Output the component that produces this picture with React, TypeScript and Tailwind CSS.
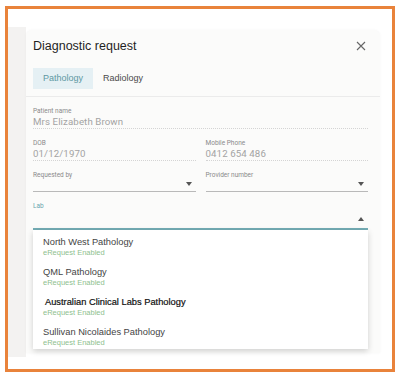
import React from 'react';

const LABS = [
  { name: 'North West Pathology', hi: false },
  { name: 'QML Pathology', hi: false },
  { name: 'Australian Clinical Labs Pathology', hi: true },
  { name: 'Sullivan Nicolaides Pathology', hi: false },
];

const Caret: React.FC<{ up?: boolean; color?: string }> = ({ up, color = '#555' }) => (
  <svg width="6" height="4" viewBox="0 0 6 4" className="shrink-0">
    <path d={up ? 'M0 4 L3 0 L6 4 Z' : 'M0 0 L6 0 L3 4 Z'} fill={color} />
  </svg>
);

const TextField: React.FC<{ label: string; value: string }> = ({ label, value }) => (
  <div className="flex-1 mt-[10px] flex flex-col border-b border-dotted border-[#d4d4d4]">
    <div className="h-[8px] text-[6.5px] leading-[8px] text-[#8a8a8a]">{label}</div>
    <div className="h-[13px] text-[9.7px] leading-[13px] text-[#a3a3a3] tracking-[0.1px]">{value}</div>
  </div>
);

const SelectField: React.FC<{ label: string }> = ({ label }) => (
  <div className="flex-1 mt-[10px] flex flex-col border-b border-[#b9b9b9]">
    <div className="h-[8px] text-[6.5px] leading-[8px] text-[#8a8a8a]">{label}</div>
    <div className="h-[12px] flex items-center justify-end pr-[4px] pb-[2px]">
      <Caret />
    </div>
  </div>
);

export default function App() {
  return (
    <div className="w-[402px] h-[378px] bg-white pt-[6px] pl-[5px] font-['Liberation_Sans',Arial,sans-serif]">
      <div className="w-[390px] h-[366px] border-[3px] border-[#e9833b] bg-white flex pt-[18px]">
        {/* backdrop strip */}
        <div className="w-[18px] h-[330px] bg-[#f3f2f1]" />

        {/* modal card */}
        <div className="w-[354px] h-[323px] mt-[3px] bg-[#fbfbfa] rounded-t-[6px] shadow-[0_0_3px_rgba(0,0,0,0.04)] flex flex-col">
          {/* header */}
          <div className="h-[26px] pt-[6px] pl-[7px] pr-[14px] flex items-center justify-between">
            <span className="text-[12.5px] leading-[20px] text-[#1f1f1f]">Diagnostic request</span>
            <svg width="10" height="10" viewBox="0 0 10 10">
              <path d="M1 1 L9 9 M9 1 L1 9" stroke="#666" strokeWidth="1.1" />
            </svg>
          </div>

          {/* tabs */}
          <div className="mt-[12px] pl-[7px] flex">
            <div className="h-[21px] px-[10px] flex items-center bg-[#e5f0f4] text-[9px] text-[#5e98a3]">
              Pathology
            </div>
            <div className="h-[21px] px-[10px] flex items-center text-[9px] text-[#4a4a4a]">Radiology</div>
          </div>
          <div className="mt-[7px] border-b border-[#ebebeb]" />

          {/* form */}
          <div className="pl-[7px] pr-[12px] flex flex-col font-['Roboto',sans-serif]">
            <TextField label="Patient name" value="Mrs Elizabeth Brown" />
            <div className="flex gap-[10px]">
              <TextField label="DOB" value="01/12/1970" />
              <TextField label="Mobile Phone" value="0412 654 486" />
            </div>
            <div className="flex gap-[10px]">
              <SelectField label="Requested by" />
              <SelectField label="Provider number" />
            </div>
            <div className="mt-[10px] flex flex-col border-b-2 border-[#74adb5]">
              <div className="h-[8px] text-[6.5px] leading-[8px] text-[#6aa6ae]">Lab</div>
              <div className="h-[18px] flex items-center justify-end pr-[4px]">
                <Caret up />
              </div>
            </div>

            {/* dropdown list */}
            <div className="h-[119px] pt-[1px] overflow-hidden bg-white shadow-[0_2px_6px_rgba(0,0,0,0.18)] font-['Liberation_Sans',Arial,sans-serif]">
              {LABS.map((lab) => (
                <div key={lab.name} className="h-[30px] pt-[5px] pl-[10px] flex flex-col">
                  <span
                    className={
                      lab.hi
                        ? 'h-[12px] leading-[12px] text-[9.3px] text-[#111] pl-[2px] [-webkit-text-stroke:0.2px_#111]'
                        : 'h-[12px] leading-[12px] text-[9.3px] text-[#444]'
                    }
                  >
                    {lab.name}
                  </span>
                  <span className="h-[10px] leading-[10px] text-[7.5px] text-[#8fbf8f]">eRequest Enabled</span>
                </div>
              ))}
            </div>
          </div>
        </div>
      </div>
    </div>
  );
}
